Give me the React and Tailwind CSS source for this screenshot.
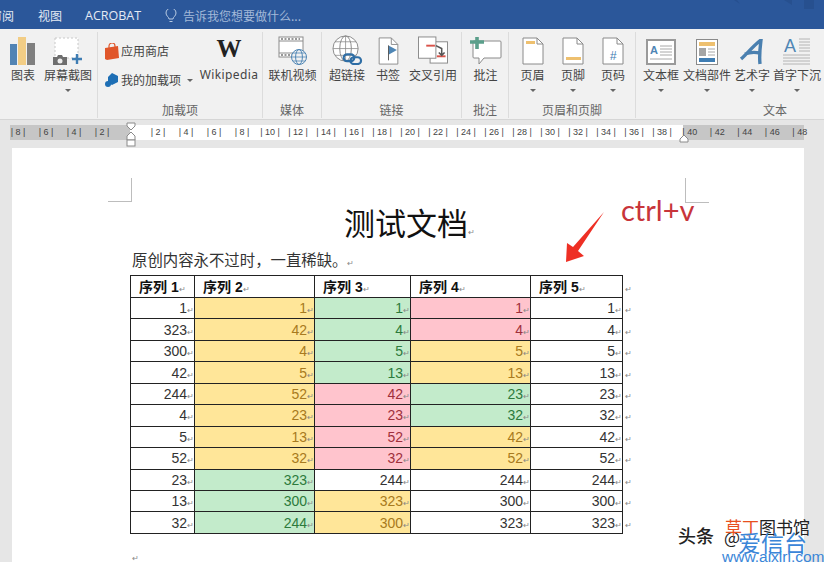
import React from 'react';

const cjk = { fontFamily: '"Noto Sans CJK SC", "Liberation Sans", sans-serif' };

function Caret() {
    return <span className="block h-0 w-0 border-x-[3px] border-t-[3px] border-x-transparent border-t-[#666]" />;
}

function ChartIcon() {
    return (
        <svg width="26" height="28" viewBox="0 0 26 28">
            <rect x="0" y="7" width="7" height="21" fill="#5284b4" />
            <rect x="8" y="0" width="8" height="28" fill="#f2cd85" />
            <rect x="17" y="6" width="8" height="22" fill="#7f7f7f" />
        </svg>
    );
}

function ScreenshotIcon() {
    return (
        <svg width="32" height="28" viewBox="0 0 32 28">
            <rect x="3" y="1" width="23" height="20" fill="#fff" stroke="#c8c8c8" strokeDasharray="2 2" />
            <path d="M1 20h4l1-2h4l1 2h4v8H1z" fill="#6e6e6e" />
            <circle cx="8" cy="24" r="2.5" fill="#eee" />
            <path d="M20 22h10M25 17v10" stroke="#3f7db3" strokeWidth="2.4" />
        </svg>
    );
}

function VideoIcon() {
    return (
        <svg width="30" height="29" viewBox="0 0 30 29">
            <rect x="1" y="1" width="24" height="20" fill="#fff" stroke="#8c8c8c" />
            <path d="M1 5h24M1 17h24" stroke="#8c8c8c" />
            <path d="M3 3h19M3 19h12" stroke="#777" strokeWidth="1.6" strokeDasharray="2 1.5" />
            <circle cx="21" cy="21" r="7.500" fill="#f1f1f1" stroke="#4f86b5" />
            <ellipse cx="21" cy="21" rx="3.400" ry="7.500" fill="none" stroke="#4f86b5" />
            <path d="M13.500 21h15M15 17h12M15 25h12" stroke="#4f86b5" strokeWidth=".8" />
        </svg>
    );
}

function LinkIcon() {
    return (
        <svg width="31" height="30" viewBox="0 0 32 31">
            <circle cx="14" cy="14" r="13" fill="#fff" stroke="#8a8a8a" />
            <ellipse cx="14" cy="14" rx="6" ry="13" fill="none" stroke="#8a8a8a" />
            <path d="M1 14h26M3 7h22M3 21h22M14 1v26" stroke="#8a8a8a" strokeWidth=".8" />
            <rect x="12" y="20" width="11" height="7" rx="3.500" fill="none" stroke="#2f6ea5" strokeWidth="2.200" />
            <rect x="19" y="23" width="11" height="7" rx="3.500" fill="none" stroke="#2f6ea5" strokeWidth="2.200" />
        </svg>
    );
}

function BookmarkIcon() {
    return (
        <svg width="21" height="28" viewBox="0 0 22 30">
            <path d="M1 1h13l7 7v21H1z" fill="#fff" stroke="#8a8a8a" />
            <path d="M14 1v7h7" fill="none" stroke="#8a8a8a" />
            <path d="M11 9l9 5-9 5z" fill="#4f86b5" />
            <path d="M11 9v16" stroke="#555" />
        </svg>
    );
}

function CrossRefIcon() {
    return (
        <svg width="32" height="29" viewBox="0 0 32 30">
            <rect x="13" y="6" width="18" height="22" fill="#fff" stroke="#8a8a8a" />
            <rect x="1" y="1" width="18" height="22" fill="#fff" stroke="#8a8a8a" />
            <path d="M9 10h9" stroke="#d9534a" strokeWidth="2" />
            <path d="M20 21h9" stroke="#d9534a" strokeWidth="2" />
            <path d="M19 10l6 3v6m-3-2l3 3 3-3" fill="none" stroke="#555" strokeWidth="1.600" />
        </svg>
    );
}

function CommentIcon() {
    return (
        <svg width="32" height="28" viewBox="0 0 32 28">
            <path d="M4 4h26a1 1 0 0 1 1 1v15a1 1 0 0 1-1 1H14l-5 6v-6H4a1 1 0 0 1-1-1V5a1 1 0 0 1 1-1z" fill="#fff" stroke="#8a8a8a" />
            <path d="M0 5h14M7 0v12" stroke="#5b9f8b" strokeWidth="3.600" />
        </svg>
    );
}

function PageIcon({ type }) {
    return (
        <svg width="22" height="28" viewBox="0 0 22 28">
            <path d="M1 1h14l6 6v20H1z" fill="#fff" stroke="#8a8a8a" />
            <path d="M15 1v6h6" fill="none" stroke="#8a8a8a" />
            {type === 'header' && <rect x="4" y="4" width="9" height="3" fill="#eec06f" />}
            {type === 'footer' && <rect x="4" y="20" width="15" height="3" fill="#eec06f" />}
            {type === 'number' && <text x="11" y="23" textAnchor="middle" fontSize="12" fontStyle="italic" fontFamily="Liberation Sans" fill="#3f7db3">#</text>}
        </svg>
    );
}

function TextBoxIcon() {
    return (
        <svg width="30" height="26" viewBox="0 0 30 26">
            <rect x="1" y="1" width="28" height="24" fill="#fff" stroke="#9a9a9a" strokeWidth="2" />
            <text x="8" y="15" textAnchor="middle" fontSize="11" fontWeight="700" fontFamily="Liberation Sans" fill="#4f86b5">A</text>
            <path d="M14 7h12M14 10h12M14 13h12M14 16h12M4 20h22" stroke="#a8a8a8" />
        </svg>
    );
}

function PartsIcon() {
    return (
        <svg width="22" height="26" viewBox="0 0 22 26">
            <rect x=".5" y=".5" width="21" height="25" fill="#fff" stroke="#8a8a8a" />
            <rect x="3" y="3" width="16" height="4" fill="#eec06f" />
            <rect x="3" y="9" width="7" height="8" fill="#a5a5a5" />
            <path d="M12 10h7M12 13h7M12 16h7" stroke="#a8a8a8" />
            <rect x="3" y="19" width="16" height="4" fill="#3f7db3" />
        </svg>
    );
}

function WordArtIcon() {
    return (
        <svg width="24" height="26" viewBox="0 0 24 26">
            <path d="M1 20C7 15 13 7 21 1c-1 8-2 15-1 24M5 15c5-2 10-2 15-1" fill="none" stroke="#4a80b0" strokeWidth="3.400" />
        </svg>
    );
}

function DropCapIcon() {
    return (
        <svg width="28" height="28" viewBox="0 0 28 28">
            <text x="7" y="15" textAnchor="middle" fontSize="18" fontFamily="Liberation Sans" fill="#4f86b5">A</text>
            <path d="M16 2h11M16 5h11M16 8h11M16 11h11M16 14h11M0 18h27M0 21h27M0 24h27M0 27h27" stroke="#b4b4b4" />
        </svg>
    );
}

function RibbonButton({ width, icon, label, caret }) {
    return (
        <div className={`${width} flex flex-col items-center`}>
            <div className="flex h-[33px] items-end justify-center">{icon}</div>
            <div className="mt-[1px] whitespace-nowrap text-[12px] leading-[18px] text-[#444]">{label}</div>
            {caret && <div className="mt-[5px]"><Caret /></div>}
        </div>
    );
}

function RibbonGroup({ width, label, children, noBorder }) {
    return (
        <div className={`${width} flex h-[86px] shrink-0 flex-col ${noBorder ? '' : 'border-r border-[#dcdcdc]'}`}>
            <div className="flex h-[70px] items-start pl-[1px]">{children}</div>
            <div className="mt-auto text-center text-[12px] leading-[16px] text-[#666]">{label}</div>
        </div>
    );
}

function AddinsGroup() {
    return (
        <RibbonGroup width="w-[165px]" label="加载项">
            <div className="flex w-[98px] flex-col gap-[11px] pl-[6px] pt-[10px]">
                <div className="flex items-center gap-[2px] text-[12px] leading-[18px] text-[#444]">
                    <svg width="14" height="17" viewBox="0 0 14 17">
                        <path d="M0 5l13-2 1 12-12 2-2-1z" fill="#e0562a" />
                        <path d="M4 5V3a3 3 0 0 1 6 0v2" fill="none" stroke="#e0562a" strokeWidth="1.200" />
                    </svg>
                    应用商店
                </div>
                <div className="flex items-center gap-[2px] text-[12px] leading-[18px] text-[#444]">
                    <svg width="14" height="14" viewBox="0 0 14 14">
                        <path d="M7 0l6 3v6l-6 3-4-2V4z" fill="#1e6fb5" />
                        <circle cx="3" cy="11" r="3" fill="#1e6fb5" />
                    </svg>
                    我的加载项
                    <span className="ml-[4px]"><Caret /></span>
                </div>
            </div>
            <div className="flex w-[64px] flex-col items-center">
                <div className="flex h-[33px] items-center justify-center text-[25px] font-bold text-[#222]" style={{ fontFamily: '"Liberation Serif", serif' }}>W</div>
                <div className="mt-[1px] whitespace-nowrap text-[12px] leading-[18px] tracking-[.4px] text-[#444]" style={{ fontFamily: '"Noto Sans", sans-serif' }}>Wikipedia</div>
            </div>
        </RibbonGroup>
    );
}

function Ruler() {
    const left = [8, 6, 4, 2];
    const right = [2, 4, 6, 8, 10, 12, 14, 16, 18, 20, 22, 24, 26, 28, 30, 32, 34, 36, 38];
    const over = [40, 42, 44, 46, 48];
    const cell = (n, key) => (
        <span key={key} className="w-[28px] shrink-0 text-center">{`| ${n} |`}</span>
    );
    return (
        <div className="relative flex h-[28px] bg-[#e6e6e6] pt-[5px]" style={{ fontFamily: '"Liberation Sans", sans-serif' }}>
            <div className="ml-[10px] flex h-[15px] w-[794px] text-[9px] leading-[15px] text-[#444]">
                <div className="flex w-[120px] shrink-0 justify-end overflow-hidden bg-[#c6c6c6]">
                    {left.map((n) => cell(n, n))}
                    <span className="w-[14px] shrink-0" />
                </div>
                <div className="flex w-[553px] shrink-0 bg-white pl-[14px]">
                    {right.map((n) => cell(n, n))}
                </div>
                <div className="w-[121px] shrink-0 bg-[#c6c6c6]">
                    <div className="ml-[-7px] flex">
                        {over.map((n) => <span key={n} className="w-[27.500px] shrink-0 text-center">{`| ${n}`}</span>)}
                    </div>
                </div>
            </div>
            {/* indent markers */}
            <svg className="absolute left-[125px] top-[2px]" width="12" height="26" viewBox="0 0 12 26">
                <path d="M2 1h8v3l-4 4-4-4z" fill="#fff" stroke="#8a8a8a" />
                <path d="M6 10l4 4v4H2v-4z" fill="#fff" stroke="#8a8a8a" />
                <rect x="2" y="18" width="8" height="6" fill="#fff" stroke="#8a8a8a" />
            </svg>
            <svg className="absolute left-[679px] top-[14px]" width="10" height="9" viewBox="0 0 10 9">
                <path d="M5 1l4 4v3H1V5z" fill="#fff" stroke="#8a8a8a" />
            </svg>
        </div>
    );
}

const rows = [
    [['1'], ['1', 'y'], ['1', 'g'], ['1', 'r'], ['1']],
    [['323'], ['42', 'y'], ['4', 'g'], ['4', 'r'], ['4']],
    [['300'], ['4', 'y'], ['5', 'g'], ['5', 'y'], ['5']],
    [['42'], ['5', 'y'], ['13', 'g'], ['13', 'y'], ['13']],
    [['244'], ['52', 'y'], ['42', 'r'], ['23', 'g'], ['23']],
    [['4'], ['23', 'y'], ['23', 'r'], ['32', 'g'], ['32']],
    [['5'], ['13', 'y'], ['52', 'r'], ['42', 'y'], ['42']],
    [['52'], ['32', 'y'], ['32', 'r'], ['52', 'y'], ['52']],
    [['23'], ['323', 'g'], ['244'], ['244'], ['244']],
    [['13'], ['300', 'g'], ['323', 'y'], ['300'], ['300']],
    [['32'], ['244', 'g'], ['300', 'y'], ['323'], ['323']],
];

const tones = {
    y: 'bg-[#ffe699] text-[#a87a20]',
    g: 'bg-[#c3ebcb] text-[#2c7a3c]',
    r: 'bg-[#ffc4cd] text-[#a0303c]',
};

function Mark({ className = '' }) {
    return <span className={`text-[8px] leading-none text-[#888] ${className}`}>↵</span>;
}

function DataTable() {
    const headers = ['序列 1', '序列 2', '序列 3', '序列 4', '序列 5'];
    return (
        <table className="w-[506px] table-fixed border-collapse text-[14px]" style={{ fontFamily: '"Liberation Sans", "Noto Sans CJK SC", sans-serif' }}>
            <colgroup>
                <col className="w-[64px]" />
                <col className="w-[120px]" />
                <col className="w-[96px]" />
                <col className="w-[120px]" />
                <col className="w-[92px]" />
                <col className="w-[14px]" />
            </colgroup>
            <thead>
                <tr className="h-[22px]">
                    {headers.map((h) => (
                        <th key={h} className="border border-[#222] pl-[8px] text-left text-[14px] font-bold leading-none text-[#111]">
                            {h}<Mark className="font-normal" />
                        </th>
                    ))}
                    <td className="pl-[2px] leading-none"><Mark /></td>
                </tr>
            </thead>
            <tbody>
                {rows.map((row, i) => (
                    <tr key={i} className="h-[21.45px]">
                        {row.map(([value, tone], j) => (
                            <td key={j} className={`border border-[#222] p-0 text-right leading-none ${tone ? tones[tone] : 'bg-white text-[#333]'}`}>
                                {value}<Mark />
                            </td>
                        ))}
                        <td className="pl-[2px] leading-none"><Mark /></td>
                    </tr>
                ))}
            </tbody>
        </table>
    );
}

export default function App() {
    return (
        <div className="h-[562px] w-[824px] overflow-hidden bg-[#e6e6e6]" style={cjk}>
            {/* title bar */}
            <div className="relative flex h-[29px] items-center bg-[#2b579a] pt-[3px] text-[12px] text-[#e4eaf4]">
                <span className="ml-[-10px] w-[48px] shrink-0">审阅</span>
                <span className="w-[47px] shrink-0">视图</span>
                <span className="w-[80px] shrink-0 text-[12.500px]" style={{ fontFamily: '"Open Sans", sans-serif' }}>ACROBAT</span>
                <svg width="12" height="15" viewBox="0 0 12 15" fill="none" stroke="#b9cbe3">
                    <path d="M4 10c0-2-3-3-3-6a5 5 0 0 1 10 0c0 3-3 4-3 6zM4.500 12.500h3" />
                </svg>
                <span className="ml-[6px] text-[#a3b9d8]">告诉我您想要做什么...</span>
                <svg className="absolute right-0 top-0" width="90" height="11" viewBox="0 0 90 11" fill="#27508f">
                    <path d="M0 0h3l3 4zM50 0h8v5zM70 0h10v9H70z" />
                </svg>
            </div>

            {/* ribbon */}
            <div className="flex h-[91px] border-b border-[#d6d6d6] bg-[#f1f1f1] pt-[3px]">
                <RibbonGroup width="w-[98px]" label="">
                    <RibbonButton width="w-[44px]" icon={<ChartIcon />} label="图表" />
                    <RibbonButton width="w-[46px]" icon={<ScreenshotIcon />} label="屏幕截图" caret />
                </RibbonGroup>
                <AddinsGroup />
                <RibbonGroup width="w-[59px]" label="媒体">
                    <RibbonButton width="w-[58px]" icon={<VideoIcon />} label="联机视频" />
                </RibbonGroup>
                <RibbonGroup width="w-[140px]" label="链接">
                    <RibbonButton width="w-[48px]" icon={<LinkIcon />} label="超链接" />
                    <RibbonButton width="w-[34px]" icon={<BookmarkIcon />} label="书签" />
                    <RibbonButton width="w-[56px]" icon={<CrossRefIcon />} label="交叉引用" />
                </RibbonGroup>
                <RibbonGroup width="w-[47px]" label="批注">
                    <RibbonButton width="w-[46px]" icon={<CommentIcon />} label="批注" />
                </RibbonGroup>
                <RibbonGroup width="w-[127px]" label="页眉和页脚">
                    <div className="w-[2px]" />
                    <RibbonButton width="w-[41px]" icon={<PageIcon type="header" />} label="页眉" caret />
                    <RibbonButton width="w-[40px]" icon={<PageIcon type="footer" />} label="页脚" caret />
                    <RibbonButton width="w-[40px]" icon={<PageIcon type="number" />} label="页码" caret />
                </RibbonGroup>
                <div className="flex h-[86px] w-[188px] shrink-0 flex-col">
                    <div className="flex h-[70px] items-start pl-[2px]">
                        <RibbonButton width="w-[46px]" icon={<TextBoxIcon />} label="文本框" caret />
                        <RibbonButton width="w-[46px]" icon={<PartsIcon />} label="文档部件" caret />
                        <RibbonButton width="w-[44px]" icon={<WordArtIcon />} label="艺术字" caret />
                        <RibbonButton width="w-[46px]" icon={<DropCapIcon />} label="首字下沉" caret />
                    </div>
                    <div className="mt-auto pl-[90px] text-center text-[12px] leading-[16px] text-[#666]">文本</div>
                </div>
            </div>

            <Ruler />

            {/* document page */}
            <div className="relative ml-[12px] h-[414px] w-[792px] bg-white pl-[118px]">
                <div className="absolute left-[96px] top-[30px] h-[24px] w-[24px] border-b border-r border-[#bdbdbd]" />
                <div className="absolute left-[673px] top-[30px] h-[25px] w-[24px] border-b border-l border-[#bdbdbd]" />

                <div className="w-[559px] pt-[54px] text-center text-[31px] leading-[40px] text-[#111]">
                    测试文档<Mark />
                </div>
                <div className="mt-[6px] pl-[2px] text-[15.400px] leading-[22px] text-[#333]">
                    原创内容永不过时，一直稀缺。<Mark />
                </div>
                <div className="mt-[5px]"><DataTable /></div>
                <div className="mt-[16px] pl-[2px] leading-[8px]"><Mark /></div>

                {/* annotation */}
                <div className="absolute left-[609px] top-[42px] text-[29px] leading-[40px] text-[#c8353a]" style={{ fontFamily: 'Lato, sans-serif' }}>ctrl+v</div>
                <svg className="absolute left-[548px] top-[60px]" width="48" height="58" viewBox="0 0 48 58">
                    <path d="M44 4L18 43l6 5-18 6 1-19 6 4z" fill="#ee2f24" />
                </svg>

                {/* watermark */}
                <div className="absolute left-[666px] top-[376px] whitespace-nowrap text-[18px] font-medium leading-[22px] text-[#222]">头条</div>
                <div className="absolute left-[712px] top-[378px] text-[17px] leading-[22px] text-[#222]">@</div>
                <div className="absolute left-[713px] top-[368px] whitespace-nowrap text-[17px] leading-[22px] text-[#222]">
                    <span className="text-[#e8501e]">草丁</span>图书馆
                </div>
                <div className="absolute left-[726px] top-[380px] whitespace-nowrap text-[23px] leading-[28px] text-[#3a86d8]">爱信台</div>
                <div className="absolute left-[710px] top-[402px] whitespace-nowrap text-[15.500px] leading-[14px] text-[#3a86d8]" style={{ fontFamily: '"Liberation Sans", sans-serif' }}>www.aixiri.com</div>
            </div>
        </div>
    );
}
